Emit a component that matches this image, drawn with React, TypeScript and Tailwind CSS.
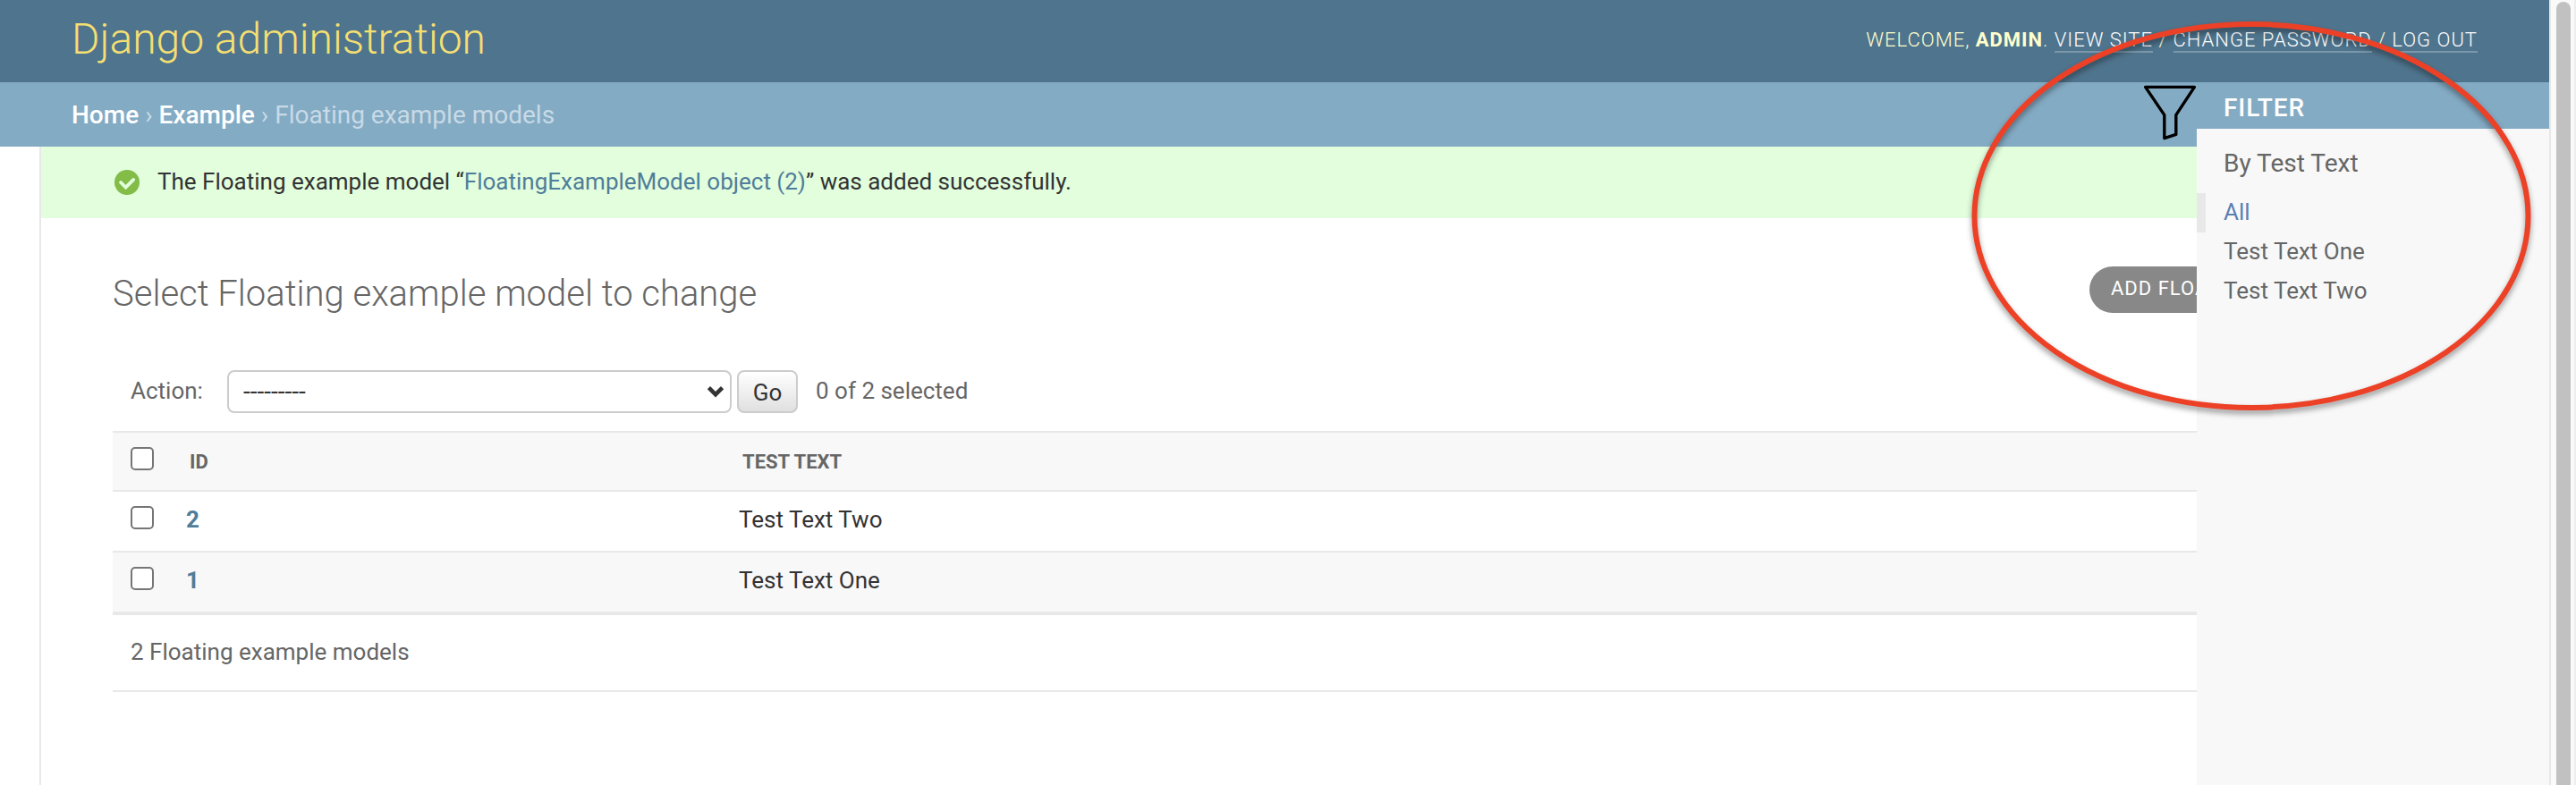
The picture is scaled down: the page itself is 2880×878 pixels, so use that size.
const rows = [
  { id: "2", text: "Test Text Two" },
  { id: "1", text: "Test Text One" },
];

function Checkbox() {
  return <span className="block h-[26px] w-[26px] rounded-[5px] border-2 border-[#767676] bg-white" />;
}

function Header() {
  return (
    <header className="flex h-[92px] items-start justify-between bg-[#4f748d] pr-[80px] pl-[80px] text-[#ffffcc]">
      <h1 className="mt-[16px] text-[48px] leading-[56px] font-light text-[#f4df72]">Django administration</h1>
      <div className="mt-[29px] text-[22px] leading-[32px] font-light tracking-[1px] whitespace-pre uppercase">
        Welcome, <strong className="font-bold">admin</strong>.{" "}
        <a className="border-b-2 border-white/25 text-white">View site</a> /{" "}
        <a className="border-b-2 border-white/25 text-white">Change password</a> /{" "}
        <a className="border-b-2 border-white/25 text-white">Log out</a>
      </div>
    </header>
  );
}

function FilterPanel() {
  return (
    <aside className="absolute top-[92px] right-0 flex h-[786px] w-[394px] flex-col bg-[#f8f8f8] text-[26px] text-[#666]">
      <h2 className="h-[52px] bg-[#84abc4] pt-[13px] pl-[30px] text-[28px] leading-[32px] font-medium tracking-[0.9px] text-white uppercase">
        Filter
      </h2>
      <h3 className="mt-[20px] pl-[30px] text-[28px] leading-[38px]">By Test Text</h3>
      <ul className="mt-[14px] leading-[42px]">
        <li className="h-[44px] border-l-[10px] border-[#e8e8e8] pl-[20px] text-[#5b80b2]">All</li>
        <li className="h-[44px] pl-[30px]">Test Text One</li>
        <li className="h-[44px] pl-[30px]">Test Text Two</li>
      </ul>
    </aside>
  );
}

export default function App() {
  return (
    <div className="flex h-[878px] w-[2880px] overflow-hidden bg-white font-['Roboto',sans-serif] text-[26px] text-[#333]">
      <div className="relative flex w-[2850px] flex-col overflow-hidden">
        <Header />
        <nav className="flex h-[72px] gap-[7px] bg-[#84abc4] pt-[21px] pl-[80px] text-[28px] leading-[32px] text-[#c8dae6]">
          <a className="font-medium text-white">Home</a>
          <span>›</span>
          <a className="font-medium text-white">Example</a>
          <span>›</span>
          <span>Floating example models</span>
        </nav>
        <div className="flex flex-1">
          <div className="w-[46px] border-r-2 border-[#e8e8e8]" />
          <main className="flex-1">
            <div className="flex h-[80px] bg-[#e2fedd] pt-[20px] pl-[82px] leading-[38px]">
              <svg className="mt-[6px] mr-[20px] h-[28px] w-[28px]" viewBox="0 0 28 28">
                <circle cx="14" cy="14" r="14" fill="#83bc47" />
                <path
                  d="M7 14l5.6 5.6L21.2 10.9"
                  fill="none"
                  stroke="#e2fedd"
                  strokeWidth="3.8"
                  strokeLinecap="round"
                />
              </svg>
              <p>
                The Floating example model “<a className="text-[#4f7d9a]">FloatingExampleModel object (2)</a>” was added
                successfully.
              </p>
            </div>
            <div className="pl-[80px]">
              <div className="flex h-[170px] w-[2330px] items-start justify-between">
                <h1 className="mt-[61px] text-[40px] leading-[48px] font-light text-[#666]">
                  Select Floating example model to change
                </h1>
                <a className="mt-[54px] h-[52px] w-[120px] overflow-hidden rounded-l-full bg-[#888] pl-[24px] text-[22px] leading-[49px] tracking-[1px] whitespace-nowrap text-white uppercase">
                  Add Floa
                </a>
              </div>
              <div className="flex h-[68px] pl-[20px] leading-[46px] text-[#666]">
                <span className="w-[108px]">Action:</span>
                <span className="flex h-[48px] w-[564px] items-center justify-between rounded-[8px] border-2 border-[#ccc] bg-white pr-[6px] pl-[16px] text-[28px] text-[#333]">
                  <span>---------</span>
                  <svg className="h-[14px] w-[20px]" viewBox="0 0 20 14">
                    <path d="M2.4 2.6l7.6 7.6 7.6-7.6" fill="none" stroke="#333" strokeWidth="4.5" />
                  </svg>
                </span>
                <span className="ml-[6px] h-[48px] w-[68px] rounded-[8px] border-2 border-[#ccc] bg-linear-to-b from-white to-[#e0e0e0] text-center leading-[46px] text-[#333]">
                  Go
                </span>
                <span className="ml-[20px]">0 of 2 selected</span>
              </div>
              <div className="grid h-[68px] grid-cols-[62px_618px_1fr] border-y-2 border-[#e8e8e8] bg-[#f8f8f8] pl-[20px] text-[22px] leading-[65px] font-bold text-[#666]">
                <span className="pt-[16px]">
                  <Checkbox />
                </span>
                <span className="pl-[4px]">ID</span>
                <span className="pl-[4px]">TEST TEXT</span>
              </div>
              <div>
                {rows.map((row) => (
                  <div
                    key={row.id}
                    className="grid h-[68px] grid-cols-[62px_618px_1fr] border-b-2 border-[#e8e8e8] pl-[20px] leading-[62px] odd:bg-white even:bg-[#f8f8f8]"
                  >
                    <span className="pt-[16px]">
                      <Checkbox />
                    </span>
                    <a className="font-bold text-[#4f7d9a]">{row.id}</a>
                    <span>{row.text}</span>
                  </div>
                ))}
              </div>
              <p className="h-[88px] border-y-2 border-[#e8e8e8] pl-[20px] leading-[83px] text-[#666]">
                2 Floating example models
              </p>
            </div>
          </main>
        </div>
        <FilterPanel />
        <svg className="absolute top-[92px] left-[2392px] h-[68px] w-[64px]" viewBox="2392 92 64 68">
          <path
            d="M2398.6 97.4H2453.4L2432.8 128.6V150.4L2419.8 154.6V128.6Z"
            fill="none"
            stroke="#000"
            strokeWidth="3.4"
            strokeLinejoin="round"
          />
        </svg>
        <svg
          className="absolute top-0 left-[2180px] h-[500px] w-[670px] drop-shadow-[0_4px_3px_rgba(0,0,0,0.4)]"
          viewBox="2180 0 670 500"
        >
          <ellipse cx="2517" cy="241.5" rx="309.5" ry="214.5" fill="none" stroke="#ec4126" strokeWidth="6" />
        </svg>
      </div>
      <div className="w-[30px] border-r-2 border-l-2 border-r-[#ededed] border-l-[#e8e8e8] bg-[#fafafa] pt-[2px] pl-[6px]">
        <div className="h-[900px] w-[16px] rounded-full bg-[#c1c1c1]" />
      </div>
    </div>
  );
}
